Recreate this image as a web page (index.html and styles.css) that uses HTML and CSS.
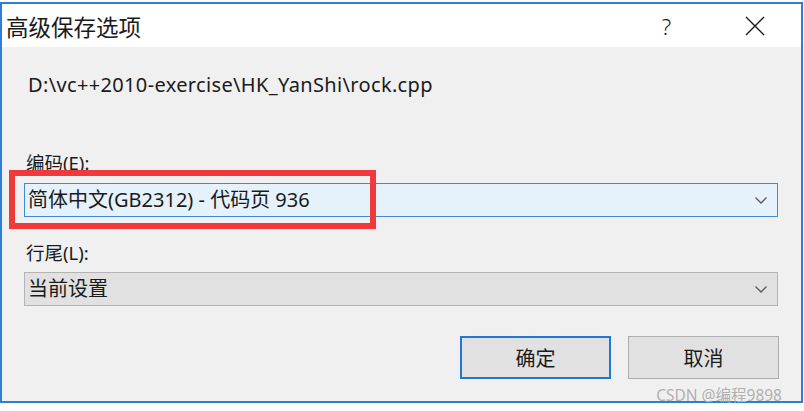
FILE: index.html
```html
<!DOCTYPE html>
<html lang="zh-CN">
<head>
<meta charset="utf-8">
<title>高级保存选项</title>
<link rel="stylesheet" href="styles.css">
</head>
<body>
<div class="window">
  <div class="titlebar">
    <span class="title">高级保存选项</span>
    <span class="help">?</span>
    <svg class="close" width="22" height="22" viewBox="0 0 22 22"><path d="M2 2 L20 20 M20 2 L2 20" stroke="#1a1a1a" stroke-width="1.4" fill="none"/></svg>
  </div>
  <div class="content">
    <div class="path">D:\vc++2010-exercise\HK_YanShi\rock.cpp</div>
    <div class="label label-enc">编码(E):</div>
    <div class="combo combo-active">
      <span class="combo-text">简体中文(GB2312) - 代码页 936</span>
      <svg class="chev" width="12" height="7" viewBox="0 0 12 7"><path d="M0.5 0.5 L6 6 L11.5 0.5" stroke="#5a5a5a" stroke-width="1.3" fill="none"/></svg>
    </div>
    <div class="label label-eol">行尾(L):</div>
    <div class="combo combo-normal">
      <span class="combo-text">当前设置</span>
      <svg class="chev" width="12" height="7" viewBox="0 0 12 7"><path d="M0.5 0.5 L6 6 L11.5 0.5" stroke="#5a5a5a" stroke-width="1.3" fill="none"/></svg>
    </div>
    <div class="buttons">
      <div class="btn btn-default">确定</div>
      <div class="btn">取消</div>
    </div>
    <div class="highlight"></div>
  </div>
</div>
<div class="watermark">CSDN @编程9898</div>
</body>
</html>
```

FILE: styles.css
```css
* { box-sizing: border-box; }
html, body { margin: 0; padding: 0; }
body {
  width: 804px;
  height: 411px;
  background: #ffffff;
  font-family: "Noto Sans", "Noto Sans CJK SC", sans-serif;
  color: #1a1a1a;
  position: relative;
  overflow: hidden;
}
.window {
  margin-top: 2px;
  width: 803px;
  height: 401px;
  border: 2px solid #2b7fd6;
  display: flex;
  flex-direction: column;
}
.titlebar {
  height: 43px;
  background: #ffffff;
  display: flex;
  align-items: center;
  padding-left: 4px;
}
.title {
  font-family: "Noto Sans CJK SC", sans-serif;
  font-size: 22.5px;
  line-height: 26px;
  color: #1a1a1a;
  flex: 1;
}
.help {
  font-family: "Noto Sans", sans-serif;
  font-weight: 300;
  font-size: 22px;
  line-height: 26px;
  margin-right: 73px;
}
.close { margin-right: 35px; }
.content {
  flex: 1;
  background: #f0f0f0;
  padding: 26px 22px 0 22px;
  display: flex;
  flex-direction: column;
  position: relative;
}
.path {
  font-size: 20px;
  line-height: 24px;
  letter-spacing: 0.35px;
  padding-left: 4px;
}
.label {
  font-family: "Noto Sans", "Noto Sans CJK SC", sans-serif;
  font-size: 18.5px;
  line-height: 22px;
  padding-left: 2px;
  color: #1a1a1a;
}
.label-enc { margin-top: 55px; }
.label-eol { margin-top: 25px; }
.combo {
  height: 34px;
  display: flex;
  align-items: center;
  justify-content: space-between;
  padding: 0 10px 0 3px;
  margin-top: 9px;
  margin-right: 1px;
}
.combo-active {
  background: #e5f1fb;
  border: 1px solid #3c8ad8;
}
.combo-normal {
  background: #e1e1e1;
  border: 1px solid #b4b4b4;
  margin-top: 8px;
}
.combo-text {
  font-family: "Noto Sans", "Noto Sans CJK SC", sans-serif;
  font-size: 20px;
  line-height: 24px;
  color: #1a1a1a;
}
.buttons {
  display: flex;
  justify-content: flex-end;
  gap: 17px;
  margin-top: 30px;
}
.btn {
  width: 151px;
  height: 43px;
  background: #e1e1e1;
  border: 1px solid #adadad;
  display: flex;
  align-items: center;
  justify-content: center;
  font-family: "Noto Sans CJK SC", sans-serif;
  font-size: 20px;
  color: #1a1a1a;
}
.btn-default {
  border: 2px solid #1f78d1;
}
.highlight {
  position: absolute;
  left: 7px;
  top: 123px;
  width: 367px;
  height: 59px;
  border: 6px solid #f0393b;
}
.watermark {
  position: absolute;
  right: 22px;
  top: 385px;
  font-family: "Noto Sans", "Noto Sans CJK SC", sans-serif;
  font-size: 15.5px;
  line-height: 20px;
  color: #b0b0b0;
}
```
